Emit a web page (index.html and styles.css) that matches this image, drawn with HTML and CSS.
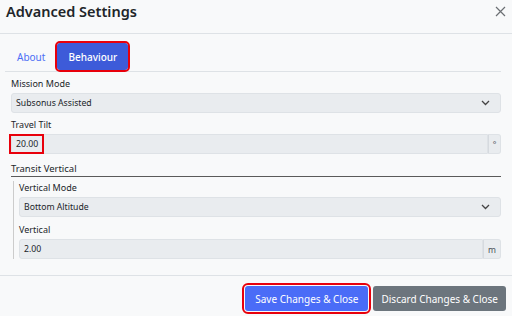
FILE: index.html
```html
<!DOCTYPE html>
<html lang="en">
<head>
    <meta charset="UTF-8">
    <meta name="viewport" content="width=device-width, initial-scale=1.0">
    <title>Advanced Settings</title>
    <link rel="stylesheet" href="styles.css">
</head>
<body>
    <div class="modal">
        <div class="modal-header">
            <h1>Advanced Settings</h1>
            <button class="close" aria-label="Close">
                <svg width="11" height="11" viewBox="0 0 11 11">
                    <path d="M1 1L10 10M10 1L1 10" stroke="#6b6f73" stroke-width="1.2" fill="none"/>
                </svg>
            </button>
        </div>

        <div class="modal-body">
            <div class="tabs">
                <a class="tab" href="#">About</a>
                <a class="tab active" href="#">Behaviour</a>
            </div>

            <div class="tab-content">
                <label>Mission Mode</label>
                <div class="control select">
                    <span>Subsonus Assisted</span>
                    <svg width="9" height="6" viewBox="0 0 9 6">
                        <path d="M1 1L4.5 4.5L8 1" stroke="#444" stroke-width="1.3" fill="none"/>
                    </svg>
                </div>

                <label>Travel Tilt</label>
                <div class="input-group">
                    <div class="control input">
                        <span>20.00</span>
                        <div class="highlight"></div>
                    </div>
                    <span class="addon">°</span>
                </div>

                <h2>Transit Vertical</h2>
                <div class="sub-group">
                    <label class="first">Vertical Mode</label>
                    <div class="control select">
                        <span>Bottom Altitude</span>
                        <svg width="9" height="6" viewBox="0 0 9 6">
                            <path d="M1 1L4.5 4.5L8 1" stroke="#444" stroke-width="1.3" fill="none"/>
                        </svg>
                    </div>

                    <label>Vertical</label>
                    <div class="input-group">
                        <div class="control input">
                            <span>2.00</span>
                        </div>
                        <span class="addon wide">m</span>
                    </div>
                </div>
            </div>
        </div>

        <div class="modal-footer">
            <button class="btn btn-primary">Save Changes &amp; Close</button>
            <button class="btn btn-secondary">Discard Changes &amp; Close</button>
        </div>
    </div>
</body>
</html>
```

FILE: styles.css
```css
body {
    margin: 0;
    font-family: "Segoe UI", "Noto Sans", sans-serif;
    background-color: #f8f9fa;
    color: #212529;
}
.modal {
    width: 512px;
    height: 316px;
    background-color: #f8f9fa;
}
.modal-header {
    height: 33px;
    display: flex;
    align-items: flex-start;
    justify-content: space-between;
    padding: 0 6px;
    border-bottom: 1px solid #dee2e6;
    box-sizing: content-box;
}
h1 {
    margin: 1px 0 0;
    font-size: 14.5px;
    line-height: 20px;
    font-weight: 600;
    color: #212529;
}
.close {
    border: none;
    background: none;
    padding: 0;
    display: flex;
    margin-top: 6px;
}
.modal-body {
    padding: 9px 11px 16px 5px;
}
.tabs {
    display: flex;
    align-items: center;
    border-bottom: 1px solid #dee2e6;
    padding-left: 6px;
    gap: 6px;
}
.tab {
    display: flex;
    align-items: center;
    height: 27px;
    padding: 0 6px;
    font-size: 10px;
    color: #4c6ef5;
    text-decoration: none;
    margin-bottom: 1px;
}
.tab.active {
    background-color: #3d5bd9;
    color: white;
    font-weight: 500;
    padding: 0 11px;
    border-radius: 3px;
    outline: 2px solid #e8000b;
}
.tab-content {
    padding-left: 6px;
}
label {
    display: block;
    font-size: 9px;
    line-height: 14px;
    padding: 5px 0 2px;
    color: #212529;
}
.sub-group label {
    padding-top: 6px;
}
.sub-group label.first {
    padding-top: 0;
}
.control {
    height: 20px;
    box-sizing: border-box;
    background-color: #e9ecef;
    border: 1px solid #dee2e6;
    border-radius: 3px;
    display: flex;
    align-items: center;
    justify-content: space-between;
    padding: 0 10px 0 4px;
    font-size: 8.7px;
    color: #212529;
}
.input-group {
    display: flex;
}
.input-group .control {
    flex: 1;
    border-radius: 3px 0 0 3px;
    position: relative;
}
.addon {
    width: 13px;
    height: 20px;
    box-sizing: border-box;
    background-color: #e9ecef;
    border: 1px solid #dee2e6;
    border-left: 1px solid #d6dadf;
    border-radius: 0 3px 3px 0;
    display: flex;
    align-items: center;
    justify-content: center;
    font-size: 8.5px;
    color: #495057;
}
.addon.wide {
    width: 18px;
}
.highlight {
    position: absolute;
    left: -3px;
    top: -1px;
    width: 35px;
    height: 20px;
    border: 2px solid #e8000b;
    box-sizing: border-box;
}
h2 {
    margin: 7px 0 0;
    font-size: 9.5px;
    font-weight: 400;
    line-height: 15px;
    border-bottom: 1px solid #5a5a5a;
}
.sub-group {
    margin: 4px 0 0 2px;
    padding-left: 5px;
    border-left: 1px solid #ccc;
}
.modal-footer {
    border-top: 1px solid #dee2e6;
    display: flex;
    justify-content: flex-end;
    gap: 5px;
    padding: 10px 6px 0;
}
.btn {
    height: 25px;
    border: none;
    border-radius: 3px;
    color: white;
    font-family: inherit;
    font-size: 10px;
    padding: 0 8px;
}
.btn-primary {
    background-color: #4a6cf7;
    outline: 2px solid #e8000b;
    outline-offset: 1px;
    padding: 0 10px;
}
.btn-secondary {
    background-color: #6c757d;
}
```
